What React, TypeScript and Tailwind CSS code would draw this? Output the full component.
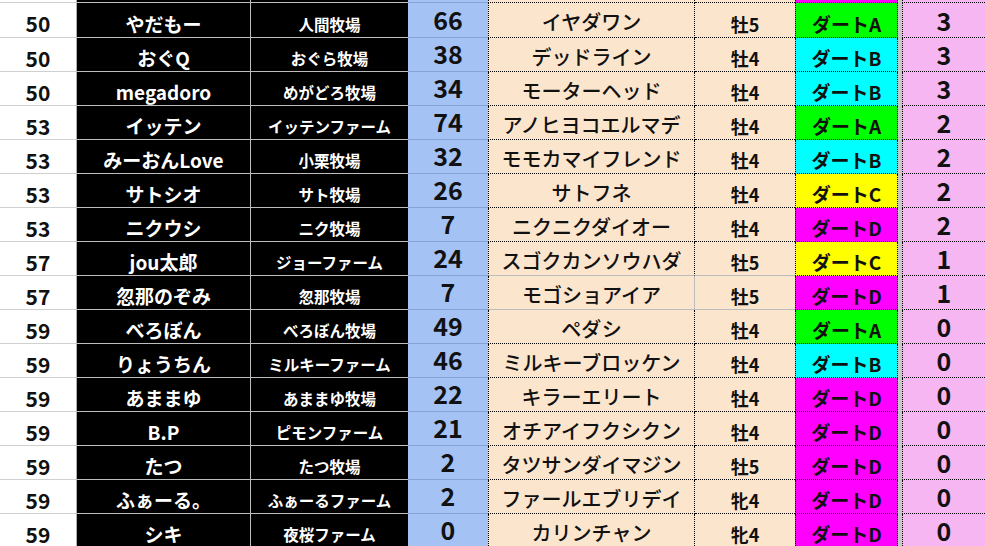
import React from "react";

type Row = {
  rank: number;
  owner: string;
  farm: string;
  pt: number;
  horse: string;
  sex: string;
  cls: "A" | "B" | "C" | "D";
  win: number;
};

const rows: Row[] = [
  { rank: 50, owner: "やだもー", farm: "人間牧場", pt: 66, horse: "イヤダワン", sex: "牡5", cls: "A", win: 3 },
  { rank: 50, owner: "おぐQ", farm: "おぐら牧場", pt: 38, horse: "デッドライン", sex: "牡4", cls: "B", win: 3 },
  { rank: 50, owner: "megadoro", farm: "めがどろ牧場", pt: 34, horse: "モーターヘッド", sex: "牡4", cls: "B", win: 3 },
  { rank: 53, owner: "イッテン", farm: "イッテンファーム", pt: 74, horse: "アノヒヨコエルマデ", sex: "牡4", cls: "A", win: 2 },
  { rank: 53, owner: "みーおんLove", farm: "小栗牧場", pt: 32, horse: "モモカマイフレンド", sex: "牡4", cls: "B", win: 2 },
  { rank: 53, owner: "サトシオ", farm: "サト牧場", pt: 26, horse: "サトフネ", sex: "牡4", cls: "C", win: 2 },
  { rank: 53, owner: "ニクウシ", farm: "ニク牧場", pt: 7, horse: "ニクニクダイオー", sex: "牡4", cls: "D", win: 2 },
  { rank: 57, owner: "jou太郎", farm: "ジョーファーム", pt: 24, horse: "スゴクカンソウハダ", sex: "牡5", cls: "C", win: 1 },
  { rank: 57, owner: "忽那のぞみ", farm: "忽那牧場", pt: 7, horse: "モゴショアイア", sex: "牡5", cls: "D", win: 1 },
  { rank: 59, owner: "べろぼん", farm: "べろぼん牧場", pt: 49, horse: "ペダシ", sex: "牡4", cls: "A", win: 0 },
  { rank: 59, owner: "りょうちん", farm: "ミルキーファーム", pt: 46, horse: "ミルキーブロッケン", sex: "牡4", cls: "B", win: 0 },
  { rank: 59, owner: "あままゆ", farm: "あままゆ牧場", pt: 22, horse: "キラーエリート", sex: "牡4", cls: "D", win: 0 },
  { rank: 59, owner: "B.P", farm: "ピモンファーム", pt: 21, horse: "オチアイフクシクン", sex: "牡4", cls: "D", win: 0 },
  { rank: 59, owner: "たつ", farm: "たつ牧場", pt: 2, horse: "タツサンダイマジン", sex: "牡5", cls: "D", win: 0 },
  { rank: 59, owner: "ふぁーる。", farm: "ふぁーるファーム", pt: 2, horse: "ファールエブリデイ", sex: "牝4", cls: "D", win: 0 },
  { rank: 59, owner: "シキ", farm: "夜桜ファーム", pt: 0, horse: "カリンチャン", sex: "牝4", cls: "D", win: 0 },
];

const clsBg: Record<Row["cls"], string> = {
  A: "bg-[#00ff00]",
  B: "bg-[#00ffff]",
  C: "bg-[#ffff00]",
  D: "bg-[#ff00ff]",
};

const COLS = "grid grid-cols-[77px_174px_157px_80px_207px_100px_103px_4px_83px] leading-none";
const FONT = { fontFamily: '"Noto Sans CJK JP", "Noto Sans", sans-serif' };

// 罫線
const B_RANK = "border-b border-r border-[#cfcfcf] border-r-[#b0b0b0]";
const B_NAME = "border-b border-r border-[#bdbdbd]";
const B_FARM = "border-b border-[#bdbdbd]";
const B_PT = "border-b border-[#86a2d6]";
const B_DOT_B = "[border-bottom:1px_dotted_#000]";
const B_GRAY_B = "[border-bottom:1px_solid_#bcbcbc]";
const B_DOT_L = "[border-left:1px_dotted_#000]";
const B_DOT_R = "[border-right:1px_dotted_#000]";
const B_GRAY_R = "[border-right:1px_solid_#bcbcbc]";

export default function App() {
  return (
    <div className="w-[985px] h-[546px] overflow-hidden bg-white" style={FONT}>
      {/* 上に切れた行 */}
      <div className={`${COLS} h-[3px]`}>
        <div className={B_RANK} />
        <div className={`bg-black ${B_NAME}`} />
        <div className={`bg-black ${B_FARM}`} />
        <div className={`bg-[#a4c2f4] ${B_PT}`} />
        <div className={`bg-[#fce5cd] ${B_DOT_B} ${B_DOT_L} ${B_DOT_R}`} />
        <div className={`bg-[#fce5cd] ${B_DOT_B}`} />
        <div className={`bg-[#ff00ff] ${B_DOT_B} ${B_DOT_L} ${B_DOT_R}`} />
        <div className="bg-[#c8c8c8]" />
        <div className={`bg-[#f5b6f1] ${B_DOT_B} ${B_DOT_L}`} />
      </div>

      {rows.map((r, i) => {
        // 8,9行目の馬名・性齢は実線グレー
        const grayBottom = i === 7 || i === 8;
        const grayRight = i === 8;
        return (
          <div key={i} className={`${COLS} ${i === 0 ? "h-[35px]" : "h-[34px]"}`}>
            <div className={`flex items-center justify-center pt-[7px] ${B_RANK} text-[21px] font-bold text-[#111]`}>
              {r.rank}
            </div>
            <div className={`flex items-center justify-center pt-[6px] bg-black ${B_NAME} text-[19px] font-bold text-white whitespace-nowrap`}>
              {r.owner}
            </div>
            <div className={`flex items-center justify-center pt-[9px] bg-black ${B_FARM} text-[15.5px] font-bold text-white whitespace-nowrap`}>
              {r.farm}
            </div>
            <div className={`flex items-center justify-center pb-[2px] bg-[#a4c2f4] ${B_PT} text-[25px] font-bold text-[#111]`}>
              {r.pt}
            </div>
            <div
              className={`flex items-center justify-center pt-[4px] bg-[#fce5cd] ${grayBottom ? B_GRAY_B : B_DOT_B} ${B_DOT_L} ${
                grayRight ? B_GRAY_R : B_DOT_R
              } text-[20px] font-medium text-[#111] whitespace-nowrap`}
            >
              {r.horse}
            </div>
            <div
              className={`flex items-center justify-center pt-[7px] bg-[#fce5cd] ${grayBottom ? B_GRAY_B : B_DOT_B} text-[18px] font-bold text-[#111]`}
            >
              {r.sex}
            </div>
            <div
              className={`flex items-center justify-center pt-[6px] ${clsBg[r.cls]} ${B_DOT_B} ${B_DOT_L} ${B_DOT_R} text-[19px] font-bold text-[#111] whitespace-nowrap`}
            >
              ダート{r.cls}
            </div>
            <div className="bg-[#c8c8c8]" />
            <div className={`flex items-center justify-center bg-[#f5b6f1] ${B_DOT_B} ${B_DOT_L} text-[25px] font-bold text-[#111]`}>
              {r.win}
            </div>
          </div>
        );
      })}
    </div>
  );
}
